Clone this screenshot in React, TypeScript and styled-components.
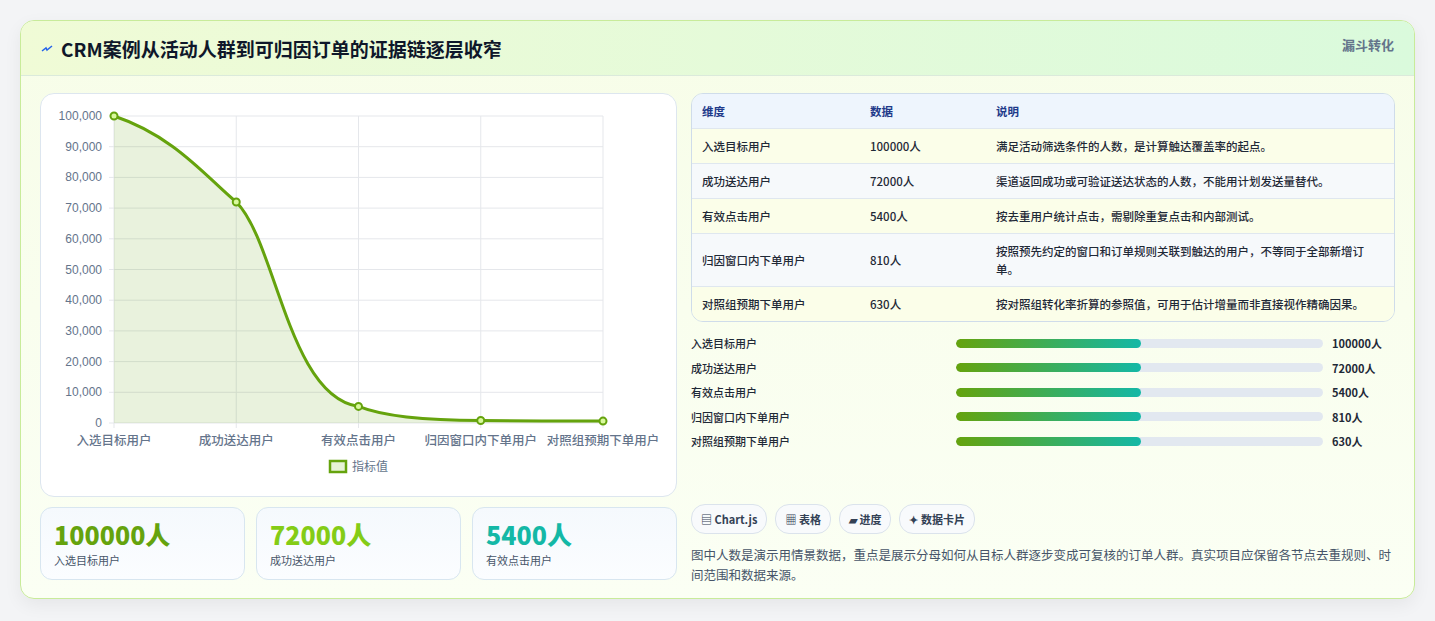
import React from "react";
import styled, { createGlobalStyle } from "styled-components";

const Global = createGlobalStyle`
  html, body { margin: 0; background: #f3f4f6; }
  body { font-family: "Noto Sans CJK SC", "Noto Sans", sans-serif; color: #1f2937; }
`;

const Page = styled.div`
  padding: 20px 20px 20px 20px;
  height: 621px;
  box-sizing: border-box;
`;
const Card = styled.div`
  border: 1px solid #c8eb9a;
  border-radius: 14px;
  background: linear-gradient(180deg, #f7fde8 0%, #fbfff4 100%);
  overflow: hidden;
  box-shadow: 0 6px 18px rgba(0,0,0,0.06);
  height: 579px;
  box-sizing: border-box;
`;
const Header = styled.div`
  height: 55px;
  box-sizing: border-box;
  display: flex;
  align-items: flex-start;
  justify-content: space-between;
  padding: 0 20px 0 20px;
  background: linear-gradient(90deg, #f0fbd6 0%, #dafadc 100%);
  border-bottom: 1px solid #dbeadb;
`;
const Title = styled.h1`
  margin: 14px 0 0 0;
  font-size: 19px;
  font-weight: 700;
  color: #0f172a;
  display: flex;
  align-items: center;
  gap: 8px;
`;
const Tag = styled.div`
  margin-top: 14px;
  font-size: 13px;
  font-weight: 700;
  color: #64748b;
`;
const Body = styled.div`
  display: grid;
  grid-template-columns: 637px 704px;
  gap: 14px;
  padding: 17px 19px 0 19px;
`;
const Col = styled.div`
  display: flex;
  flex-direction: column;
`;
const ChartBox = styled.div`
  height: 404px;
  box-sizing: border-box;
  border: 1px solid #dde6ef;
  border-radius: 14px;
  background: #fff;
`;
const Stats = styled.div`
  display: grid;
  grid-template-columns: repeat(3, 1fr);
  gap: 11px;
  margin-top: 10px;
`;
const Stat = styled.div`
  height: 73px;
  box-sizing: border-box;
  border: 1px solid #d8e6f0;
  border-radius: 12px;
  background: linear-gradient(180deg, #f5f9fd, #fbfdff);
  padding: 10px 13px;
`;
const StatNum = styled.div<{ $c: string }>`
  font-size: 25px;
  font-weight: 800;
  color: ${p => p.$c};
  line-height: 32px;
`;
const StatLabel = styled.div`
  font-size: 11px;
  color: #475569;
  margin-top: 2px;
`;
const Table = styled.div`
  border: 1px solid #cfdcea;
  border-radius: 12px;
  overflow: hidden;
  font-size: 11.5px;
`;
const Row = styled.div<{ $head?: boolean; $alt?: boolean }>`
  display: grid;
  grid-template-columns: 168px 126px 1fr;
  padding: 0 14px 0 10px;
  min-height: 34px;
  align-items: center;
  border-top: ${p => (p.$head ? "none" : "1px solid #dfe7ef")};
  background: ${p => (p.$head ? "#eef5fd" : p.$alt ? "#f6f9fb" : "#fbfee9")};
  color: ${p => (p.$head ? "#1e3a8a" : "#1f2937")};
  font-weight: ${p => (p.$head ? 700 : 500)};
  line-height: 18px;
  & > div { padding: 8px 0; }
`;
const Bars = styled.div`
  margin-top: 12px;
  display: flex;
  flex-direction: column;
  gap: 6.5px;
  height: 170px;
`;
const BarRow = styled.div`
  display: grid;
  grid-template-columns: 265px 367px 1fr;
  align-items: center;
  height: 18px;
  font-size: 11px;
  font-weight: 500;
`;
const Track = styled.div`
  height: 9px;
  border-radius: 5px;
  background: #e2e8f0;
  overflow: hidden;
`;
const Fill = styled.div`
  height: 100%;
  width: 50.5%;
  border-radius: 5px;
  background: linear-gradient(90deg, #65a30d, #14b8a6);
`;
const Val = styled.div`
  padding-left: 9px;
  font-weight: 700;
`;
const Chips = styled.div`
  display: flex;
  gap: 8px;
  margin-top: 0;
`;
const Chip = styled.div`
  height: 28px;
  padding: 0 9px;
  border: 1px solid #dbe3ec;
  border-radius: 14px;
  background: #f8fafc;
  display: flex;
  align-items: center;
  font-size: 11px;
  font-weight: 700;
  color: #334155;
  gap: 3px;
`;
const Note = styled.p`
  margin: 11px 0 0 0;
  font-size: 12.5px;
  line-height: 20px;
  color: #475569;
`;

const labels = ["入选目标用户", "成功送达用户", "有效点击用户", "归因窗口内下单用户", "对照组预期下单用户"];
const vals = [100000, 72000, 5400, 810, 630];
const desc = [
  "满足活动筛选条件的人数，是计算触达覆盖率的起点。",
  "渠道返回成功或可验证送达状态的人数，不能用计划发送量替代。",
  "按去重用户统计点击，需剔除重复点击和内部测试。",
  "按照预先约定的窗口和订单规则关联到触达的用户，不等同于全部新增订单。",
  "按对照组转化率折算的参照值，可用于估计增量而非直接视作精确因果。",
];

const X0 = 73, X1 = 562, Y0 = 22, Y1 = 329;
const xs = labels.map((_, i) => X0 + ((X1 - X0) * i) / 4);
const ys = vals.map(v => Y1 - ((Y1 - Y0) * v) / 100000);

function Chart() {
  const linePath =
    `M${xs[0]},${ys[0]} C${xs[0] + 60},${ys[0] + 20} ${xs[1] - 30},${ys[1] - 25} ${xs[1]},${ys[1]} ` +
    `C${xs[1] + 40},${ys[1] + 40} ${xs[2] - 70},${ys[2] - 10} ${xs[2]},${ys[2]} ` +
    `C${xs[2] + 30},${ys[3] - 2} ${xs[3] - 40},${ys[3]} ${xs[3]},${ys[3]} ` +
    `C${xs[3] + 40},${ys[4]} ${xs[4] - 40},${ys[4]} ${xs[4]},${ys[4]}`;
  return (
    <svg width="636" height="402" style={{ display: "block" }}>
      {Array.from({ length: 11 }).map((_, i) => {
        const y = Y0 + ((Y1 - Y0) * i) / 10;
        return (
          <g key={i}>
            <line x1={X0 - 5} x2={X1} y1={y} y2={y} stroke="#e5e7eb" />
            <text x={X0 - 12} y={y + 4} textAnchor="end" fontSize="12" fill="#64748b" fontFamily="Liberation Sans, sans-serif">
              {(100000 - i * 10000).toLocaleString("en-US")}
            </text>
          </g>
        );
      })}
      {xs.map((x, i) => (
        <g key={i}>
          <line x1={x} x2={x} y1={Y0} y2={Y1 + 5} stroke="#e5e7eb" />
          <text x={x} y={Y1 + 22} textAnchor="middle" fontSize="12.5" fontWeight="500" fill="#64748b">{labels[i]}</text>
        </g>
      ))}
      <path d={`${linePath} L${X1},${Y1} L${X0},${Y1} Z`} fill="rgba(101,163,13,0.14)" />
      <path d={linePath} fill="none" stroke="#65a30d" strokeWidth="3" />
      {xs.map((x, i) => (
        <circle key={i} cx={x} cy={ys[i]} r="3.5" fill="#d9f99d" stroke="#65a30d" strokeWidth="2" />
      ))}
      <rect x="289" y="367" width="16" height="11" fill="#e7f3d6" stroke="#65a30d" strokeWidth="2.5" />
      <text x="311" y="377" fontSize="12" fill="#64748b">指标值</text>
    </svg>
  );
}

export default function App() {
  return (
    <Page>
      <Global />
      <Card>
        <Header>
          <Title>
            <svg width="12" height="12" viewBox="0 0 12 12"><path d="M1 8 L5 5 L6 7 L11 3" stroke="#2563eb" strokeWidth="1.5" fill="none" /></svg>
            CRM案例从活动人群到可归因订单的证据链逐层收窄
          </Title>
          <Tag>漏斗转化</Tag>
        </Header>
        <Body>
          <Col>
            <ChartBox><Chart /></ChartBox>
            <Stats>
              <Stat><StatNum $c="#65a30d">100000人</StatNum><StatLabel>入选目标用户</StatLabel></Stat>
              <Stat><StatNum $c="#84cc16">72000人</StatNum><StatLabel>成功送达用户</StatLabel></Stat>
              <Stat><StatNum $c="#14b8a6">5400人</StatNum><StatLabel>有效点击用户</StatLabel></Stat>
            </Stats>
          </Col>
          <Col>
            <Table>
              <Row $head><div>维度</div><div>数据</div><div>说明</div></Row>
              {labels.map((l, i) => (
                <Row key={l} $alt={i % 2 === 1}>
                  <div>{l}</div><div>{vals[i]}人</div><div>{desc[i]}</div>
                </Row>
              ))}
            </Table>
            <Bars>
              {labels.map((l, i) => (
                <BarRow key={l}>
                  <div>{l}</div>
                  <Track><Fill /></Track>
                  <Val>{vals[i]}人</Val>
                </BarRow>
              ))}
            </Bars>
            <Chips>
              <Chip>▤ Chart.js</Chip>
              <Chip>▦ 表格</Chip>
              <Chip>▰ 进度</Chip>
              <Chip>✦ 数据卡片</Chip>
            </Chips>
            <Note>图中人数是演示用情景数据，重点是展示分母如何从目标人群逐步变成可复核的订单人群。真实项目应保留各节点去重规则、时间范围和数据来源。</Note>
          </Col>
        </Body>
      </Card>
    </Page>
  );
}
